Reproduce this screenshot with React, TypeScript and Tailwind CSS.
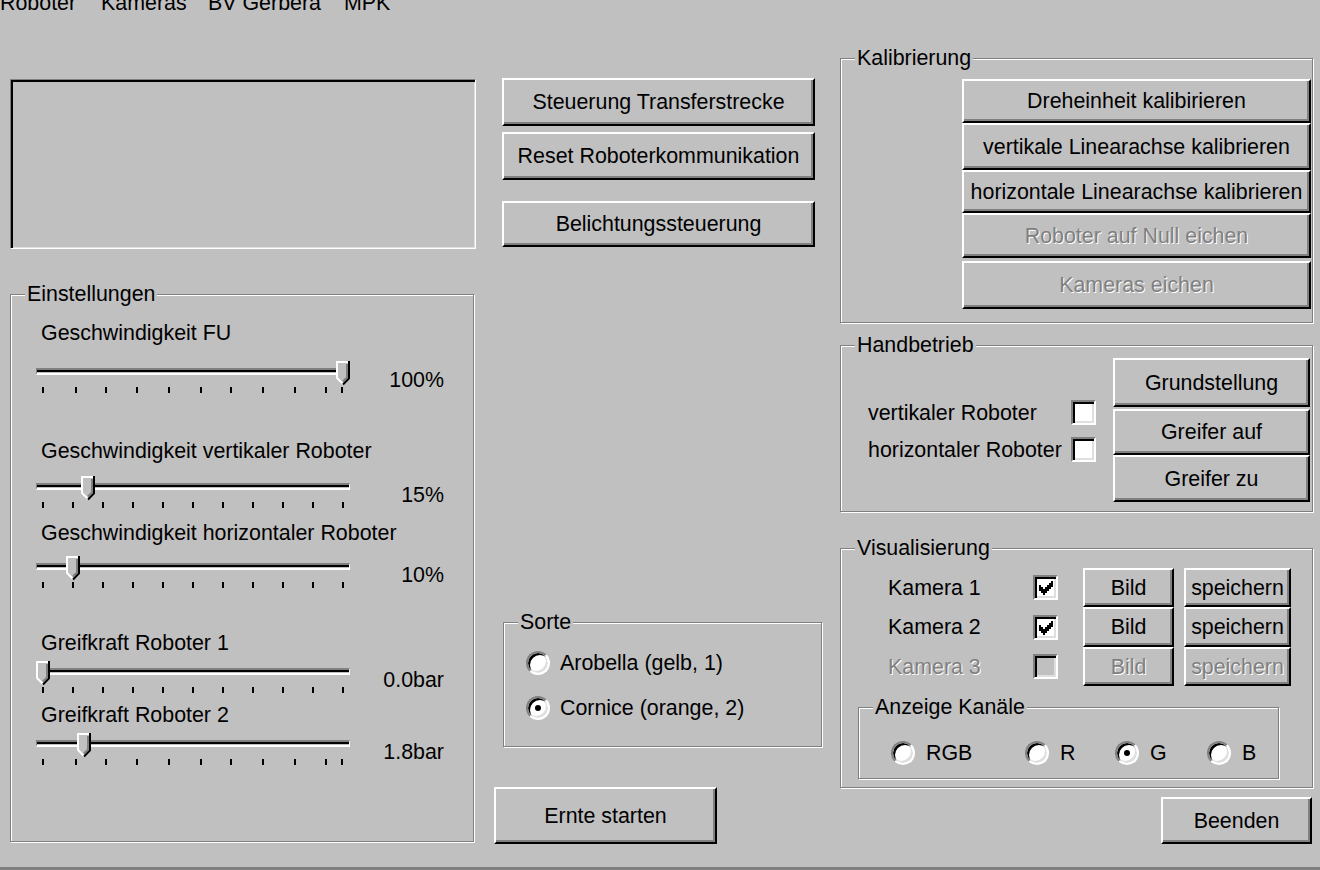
import React from "react";

type BtnProps = { label: string; className?: string; disabled?: boolean };

const Btn: React.FC<BtnProps> = ({ label, className = "", disabled }) => (
  <button
    type="button"
    className={`flex items-center justify-center bg-[#c0c0c0] border-2 border-t-white border-l-white border-r-black border-b-black shadow-[inset_-2px_-2px_0_#808080] leading-[24px] whitespace-nowrap ${
      disabled ? "text-[#808080] [text-shadow:1px_1px_0_#fff]" : "text-black"
    } ${className}`}
  >
    {label}
  </button>
);

type GroupProps = { title: string; className?: string; children?: React.ReactNode };

// etched frame with the caption sitting on the top line
const Group: React.FC<GroupProps> = ({ title, className = "", children }) => (
  <div className={`relative border border-[#808080] shadow-[1px_1px_0_#fff,inset_1px_1px_0_#fff] ${className}`}>
    <span className="absolute -top-[13px] left-[14px] px-[2px] bg-[#c0c0c0] leading-[24px] whitespace-nowrap">
      {title}
    </span>
    {children}
  </div>
);

const CHECK = [
  "......X",
  ".....XX",
  "X...XXX",
  "XX.XXX.",
  "XXXXX..",
  ".XXX...",
  "..X....",
];

const CheckMark = () => (
  <svg width="14" height="14" viewBox="0 0 14 14" className="ml-[1px] mt-[1px]">
    {CHECK.flatMap((row, y) =>
      row.split("").map((c, x) =>
        c === "X" ? <rect key={`${x}-${y}`} x={x * 2} y={y * 2} width="2" height="2" fill="#000" /> : null
      )
    )}
  </svg>
);

const Checkbox: React.FC<{ checked?: boolean; disabled?: boolean }> = ({ checked, disabled }) => (
  <div
    className={`w-[25px] h-[25px] shrink-0 flex items-center justify-center border-2 border-t-[#808080] border-l-[#808080] border-r-white border-b-white shadow-[inset_2px_2px_0_#000,inset_-2px_-2px_0_#dfdfdf] ${
      disabled ? "bg-[#c0c0c0]" : "bg-white"
    }`}
  >
    {checked && <CheckMark />}
  </div>
);

const Radio: React.FC<{ on?: boolean }> = ({ on }) => (
  <div className="w-[24px] h-[24px] shrink-0 rounded-full bg-white border-2 border-t-[#808080] border-l-[#808080] border-r-white border-b-white shadow-[inset_2px_2px_0_#000,inset_-2px_-2px_0_#dfdfdf] flex items-center justify-center">
    {on && <div className="w-[6px] h-[6px] rounded-full bg-black" />}
  </div>
);

const Thumb = () => (
  <svg width="14" height="25" viewBox="0 0 14 25">
    <path d="M0 0H14V17L7 24L0 17Z" fill="#c0c0c0" />
    <path d="M1 17.5V1H12.5" stroke="#fff" strokeWidth="2" fill="none" />
    <path d="M1 17L7 23" stroke="#fff" strokeWidth="2" fill="none" />
    <path d="M13 0V17.3L7 23.5" stroke="#000" strokeWidth="2" fill="none" />
    <path d="M11 3V16.5L7 20.5" stroke="#808080" strokeWidth="2" fill="none" />
  </svg>
);

// tick x offsets inside the 314px slider box
const evenTicks = Array.from({ length: 11 }, (_, i) => 6 + i * 30);
const fuTicks = [6, 39, 69, 100, 132, 164, 194, 226, 258, 289, 305];

const Slider: React.FC<{ frac: number; ticks: number[] }> = ({ frac, ticks }) => (
  <div className="relative w-[314px] h-[33px] flex flex-col">
    <div className="mt-[7px] h-[7px] border-t-2 border-l border-t-[#808080] border-l-[#808080] border-b-2 border-r border-b-white border-r-white bg-black shadow-[inset_0_-1px_0_#c0c0c0]" />
    <div className="relative mt-[12px] h-[6px]">
      {ticks.map((x) => (
        <div key={x} className="absolute top-0 w-[2px] h-[6px] bg-black" style={{ left: x }} />
      ))}
    </div>
    <div className="absolute top-0" style={{ left: Math.round(frac * 300) }}>
      <Thumb />
    </div>
  </div>
);

const sliders = [
  { label: "Geschwindigkeit FU", value: "100%", frac: 1, ticks: fuTicks, labelMt: "mt-[26px]", sliderMt: "mt-[16px]" },
  { label: "Geschwindigkeit vertikaler Roboter", value: "15%", frac: 0.15, ticks: evenTicks, labelMt: "mt-[45px]", sliderMt: "mt-[13px]" },
  { label: "Geschwindigkeit horizontaler Roboter", value: "10%", frac: 0.1, ticks: evenTicks, labelMt: "mt-[12px]", sliderMt: "mt-[11px]" },
  { label: "Greifkraft Roboter 1", value: "0.0bar", frac: 0, ticks: evenTicks, labelMt: "mt-[42px]", sliderMt: "mt-[6px]" },
  { label: "Greifkraft Roboter 2", value: "1.8bar", frac: 0.137, ticks: fuTicks, labelMt: "mt-[9px]", sliderMt: "mt-[6px]" },
];

const cameras = [
  { name: "Kamera 1", checked: true, disabled: false, h: "h-[39px]" },
  { name: "Kamera 2", checked: true, disabled: false, h: "h-[40px]" },
  { name: "Kamera 3", checked: false, disabled: true, h: "h-[39px]" },
];

const channels = [
  { name: "RGB", on: false },
  { name: "R", on: false },
  { name: "G", on: true },
  { name: "B", on: false },
];

export default function App() {
  return (
    <div className="w-[1320px] h-[870px] overflow-hidden bg-[#c0c0c0] text-black text-[21.4px] leading-[24px] font-['Liberation_Sans',Arial,sans-serif] flex flex-col">
      {/* menu bar, scrolled half out of view */}
      <div className="-mt-[9px] h-[24px] grid grid-cols-[101px_107px_136px_auto]">
        <span>Roboter</span>
        <span>Kameras</span>
        <span>BV Gerbera</span>
        <span>MPK</span>
      </div>

      <div className="h-[852px] flex">
        {/* left column */}
        <div className="ml-[10px] w-[466px] flex flex-col">
          <div className="mt-[64px] h-[170px] border border-t-[#808080] border-l-[#808080] border-r-white border-b-white shadow-[inset_2px_2px_0_#000,inset_-1px_-1px_0_#dfdfdf]" />

          <Group title="Einstellungen" className="mt-[45px] w-[464px] h-[548px]">
            <div className="flex flex-col">
              {sliders.map((s) => (
                <div key={s.label} className="flex flex-col">
                  <span className={`pl-[30px] ${s.labelMt}`}>{s.label}</span>
                  <div className={`flex items-start pl-[25px] ${s.sliderMt}`}>
                    <Slider frac={s.frac} ticks={s.ticks} />
                    <span className="mt-[7px] w-[94px] text-right">{s.value}</span>
                  </div>
                </div>
              ))}
            </div>
          </Group>
        </div>

        {/* middle column */}
        <div className="ml-[18px] w-[328px] flex flex-col">
          <Btn label="Steuerung Transferstrecke" className="mt-[63px] ml-[8px] w-[313px] h-[48px]" />
          <Btn label="Reset Roboterkommunikation" className="mt-[6px] ml-[8px] w-[313px] h-[48px]" />
          <Btn label="Belichtungssteuerung" className="mt-[21px] ml-[8px] w-[313px] h-[46px]" />

          <Group title="Sorte" className="mt-[375px] ml-[9px] w-[319px] h-[125px]">
            <div className="flex flex-col pl-[22px]">
              <div className="mt-[28px] h-[24px] flex items-center gap-[10px]">
                <Radio />
                <span>Arobella (gelb, 1)</span>
              </div>
              <div className="mt-[21px] h-[24px] flex items-center gap-[10px]">
                <Radio on />
                <span>Cornice (orange, 2)</span>
              </div>
            </div>
          </Group>

          <Btn label="Ernte starten" className="mt-[40px] w-[223px] h-[57px]" />
        </div>

        {/* right column */}
        <div className="ml-[18px] w-[473px] flex flex-col">
          <Group title="Kalibrierung" className="mt-[43px] h-[265px]">
            <div className="flex flex-col pl-[121px] pt-[20px]">
              <Btn label="Dreheinheit kalibirieren" className="w-[349px] h-[44px]" />
              <Btn label="vertikale Linearachse kalibrieren" className="w-[349px] h-[47px]" />
              <Btn label="horizontale Linearachse kalibrieren" className="w-[349px] h-[43px]" />
              <Btn label="Roboter auf Null eichen" disabled className="w-[349px] h-[45px]" />
              <Btn label="Kameras eichen" disabled className="mt-[3px] w-[349px] h-[48px]" />
            </div>
          </Group>

          <Group title="Handbetrieb" className="mt-[22px] h-[167px]">
            <div className="flex">
              <div className="pl-[27px] pt-[54px] flex flex-col gap-[12px]">
                <div className="h-[25px] flex items-center">
                  <span className="w-[203px]">vertikaler Roboter</span>
                  <Checkbox />
                </div>
                <div className="h-[25px] flex items-center">
                  <span className="w-[203px]">horizontaler Roboter</span>
                  <Checkbox />
                </div>
              </div>
              <div className="ml-[17px] mt-[12px] w-[197px] flex flex-col">
                <Btn label="Grundstellung" className="w-full h-[49px]" />
                <Btn label="Greifer auf" className="mt-[2px] w-full h-[46px]" />
                <Btn label="Greifer zu" className="w-full h-[47px]" />
              </div>
            </div>
          </Group>

          <Group title="Visualisierung" className="mt-[36px] h-[240px]">
            <div className="flex flex-col pt-[19px]">
              {cameras.map((c) => (
                <div key={c.name} className={`flex items-center pl-[47px] ${c.h}`}>
                  <span
                    className={`w-[145px] ${c.disabled ? "text-[#808080] [text-shadow:1px_1px_0_#fff]" : ""}`}
                  >
                    {c.name}
                  </span>
                  <Checkbox checked={c.checked} disabled={c.disabled} />
                  <Btn label="Bild" disabled={c.disabled} className="ml-[25px] w-[91px] h-full" />
                  <Btn label="speichern" disabled={c.disabled} className="ml-[10px] w-[107px] h-full" />
                </div>
              ))}

              <Group title="Anzeige Kanäle" className="mt-[21px] ml-[17px] w-[421px] h-[72px]">
                <div className="mt-[33px] pl-[32px] grid grid-cols-[134px_90px_92px_auto]">
                  {channels.map((ch) => (
                    <div key={ch.name} className="h-[24px] flex items-center gap-[11px]">
                      <Radio on={ch.on} />
                      <span>{ch.name}</span>
                    </div>
                  ))}
                </div>
              </Group>
            </div>
          </Group>

          <Btn label="Beenden" className="self-end mr-[1px] mt-[9px] w-[151px] h-[47px]" />
        </div>
      </div>

      <div className="h-[3px] bg-[#808080]" />
    </div>
  );
}
